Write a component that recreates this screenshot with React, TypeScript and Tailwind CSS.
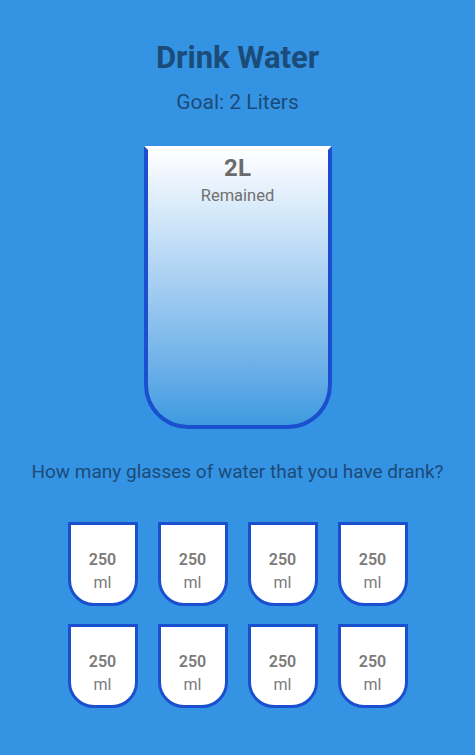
import React from "react";

function SmallCup() {
  return (
    <div className="w-[70px] h-[84px] bg-white border-[3px] border-[#1a4fcf] rounded-b-[26px] flex flex-col items-center justify-center pt-[14px] text-[#7a7a7a] leading-[23px]">
      <span className="text-[16px] font-semibold">250</span>
      <span className="text-[16px]">ml</span>
    </div>
  );
}

export default function App() {
  return (
    <div
      className="w-[475px] h-[755px] bg-[#3593e3] flex flex-col items-center"
      style={{ fontFamily: "Roboto, 'Noto Sans', sans-serif" }}
    >
      <h1 className="mt-[40px] text-[31px] font-bold leading-[36px] text-[#1b4b78]">Drink Water</h1>
      <div className="mt-[14px] text-[21px] leading-[24px] text-[#1b4b78]">Goal: 2 Liters</div>
      <div className="mt-[32px] w-[188px] h-[283px] border-4 border-[#1a4fcf] border-t-white rounded-b-[44px] bg-gradient-to-b from-white to-[#3d9ae0] flex flex-col items-center pt-[4px]">
        <span className="text-[24px] font-bold leading-[28px] text-[#6b6b6b]">2L</span>
        <span className="text-[16.5px] leading-[24px] text-[#707070] mt-[2px]">Remained</span>
      </div>
      <div className="mt-[31px] text-[19px] leading-[24px] text-[#1b4b78]">How many glasses of water that you have drank?</div>
      <div className="mt-[38px] grid grid-cols-4 gap-x-[20px] gap-y-[18px]">
        {Array.from({ length: 8 }).map((_, i) => (
          <SmallCup key={i} />
        ))}
      </div>
    </div>
  );
}
